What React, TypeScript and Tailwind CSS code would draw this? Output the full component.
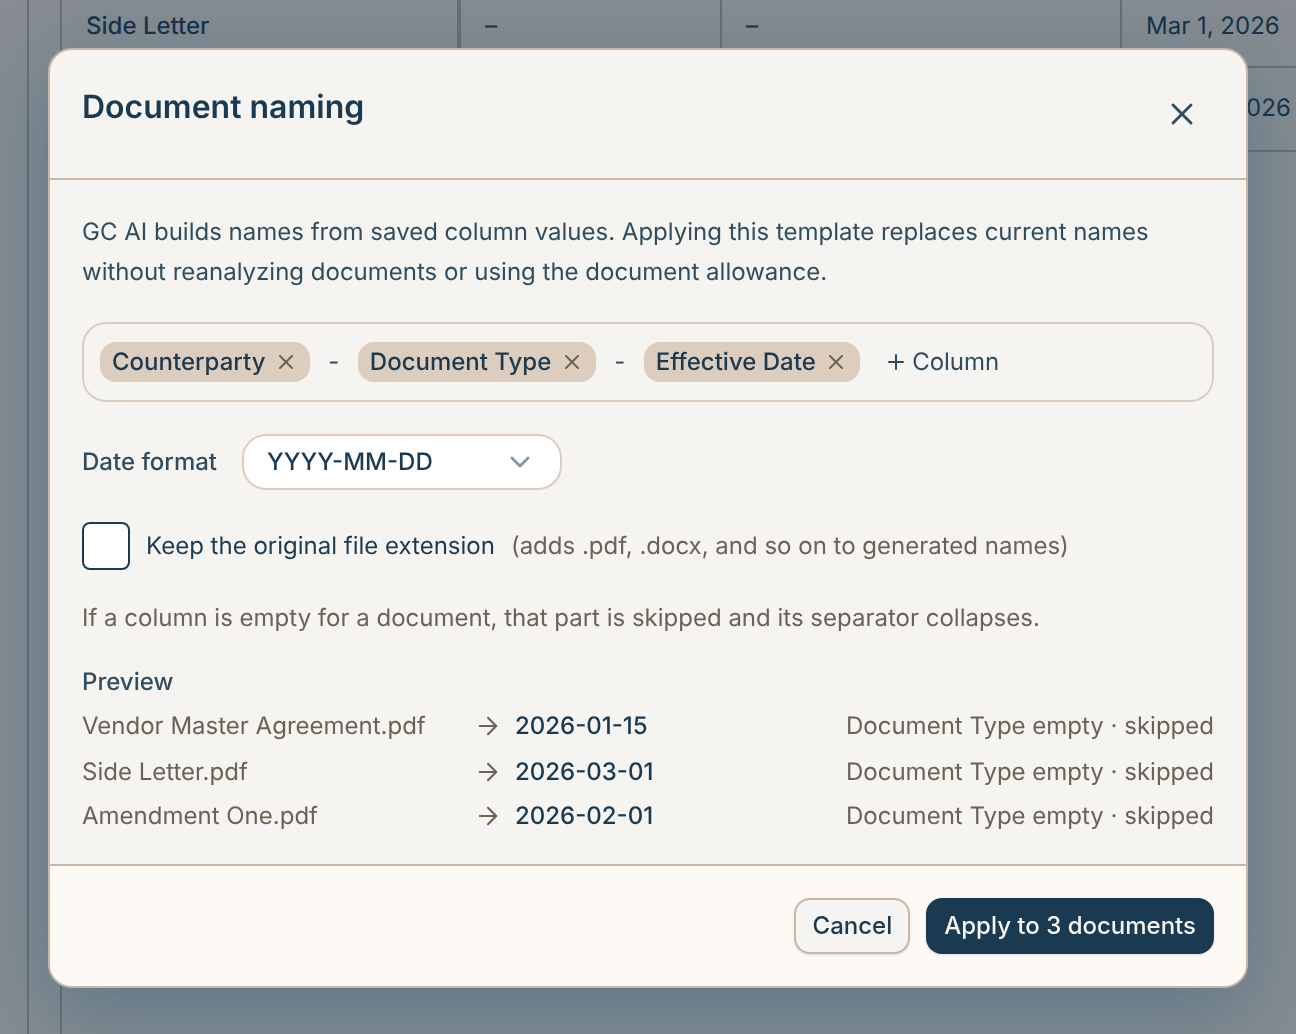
import { ArrowRight, ChevronDown, Plus, X } from 'lucide-react';

const chips = ['Counterparty', 'Document Type', 'Effective Date'];

const previews = [
  { file: 'Vendor Master Agreement.pdf', name: '2026-01-15' },
  { file: 'Side Letter.pdf', name: '2026-03-01' },
  { file: 'Amendment One.pdf', name: '2026-02-01' },
];

function BackgroundTable() {
  return (
    <div className="flex h-full text-[24px] text-[#14324a]">
      <div className="w-[27px] shrink-0" />
      <div className="h-full w-[35px] shrink-0 border-x-2 border-[#666f73]" />
      <div className="min-w-0 flex-1">
        <div className="flex h-[68px] border-b-2 border-[#666f73]">
          <div className="w-[399px] shrink-0 border-r-4 border-[#666f73] pl-[24px] pt-[8px] font-medium leading-[36px]">Side Letter</div>
          <div className="w-[261px] shrink-0 border-r-2 border-[#666f73] pl-[24px] pt-[8px] leading-[36px]">–</div>
          <div className="w-[400px] shrink-0 border-r-2 border-[#666f73] pl-[24px] pt-[8px] leading-[36px]">–</div>
          <div className="flex-1 pl-[24px] pt-[8px] leading-[36px] whitespace-nowrap">Mar 1, 2026</div>
        </div>
        <div className="flex h-[84px] border-b-2 border-[#666f73]">
          <div className="w-[1060px] shrink-0" />
          <div className="flex-1 pl-[24px] pt-[22px] leading-[36px] whitespace-nowrap">Jan 15, 2026</div>
        </div>
      </div>
    </div>
  );
}

export default function App() {
  return (
    <div className="relative h-[1034px] w-[1296px] overflow-hidden bg-[#868c91] font-['Inter',sans-serif] antialiased [text-rendering:geometricPrecision]">
      <BackgroundTable />
      <div className="absolute left-[48px] top-[48px] flex h-[940px] w-[1200px] transform-gpu flex-col overflow-hidden rounded-[24px] border-2 border-[#c8b6a6] bg-[#f5f4f0] shadow-[0_24px_80px_rgba(30,90,120,0.4)]">
        <header className="flex h-[130px] shrink-0 items-start justify-between border-b-2 border-[#c8b6a6] pl-[32px] pr-[46px]">
          <h1 className="pt-[37px] text-[32px] font-semibold leading-[40px] text-[#1a3a52]">Document naming</h1>
          <button className="mt-[46px] text-[#2f4d60]">
            <X size={36} strokeWidth={1.9} />
          </button>
        </header>

        <main className="flex-1 px-[32px] pt-[32px]">
          <p className="text-[24px] leading-[40px] text-[#2f4d60]">
            GC AI builds names from saved column values. Applying this template replaces current names
            without reanalyzing documents or using the document allowance.
          </p>

          <div className="mt-[30px] flex h-[80px] items-center rounded-[24px] border-2 border-[#dccdbe] pl-[16px]">
            {chips.map((chip, i) => (
              <div key={chip} className="flex items-center">
                {i > 0 && <span className="w-[48px] text-center text-[24px] text-[#2f4d60]">-</span>}
                <span className="flex h-[40px] items-center gap-[8.4px] rounded-[16px] bg-[#dccdbe] px-[12px] text-[24px] font-medium text-[#1a3a52]">
                  {chip}
                  <X size={24} strokeWidth={2} className="text-[#6b6155]" />
                </span>
              </div>
            ))}
            <span className="ml-[24px] flex items-center gap-[4px] text-[24px] text-[#2f4d60]">
              <Plus size={24} strokeWidth={2} />
              Column
            </span>
          </div>

          <div className="mt-[32px] flex items-center gap-[25px]">
            <span className="text-[24px] font-medium text-[#2f4d60]">Date format</span>
            <div className="flex h-[56px] w-[320px] items-center justify-between rounded-[24px] border-2 border-[#dccdbe] bg-white pl-[23px] pr-[24px] text-[24px] font-medium text-[#1a3a52]">
              YYYY-MM-DD
              <ChevronDown size={32} strokeWidth={2} className="text-[#8295a3]" />
            </div>
          </div>

          <div className="mt-[32px] flex items-center">
            <span className="h-[48px] w-[48px] rounded-[8px] border-2 border-[#1a3a52] bg-white" />
            <span className="ml-[16px] text-[24px] text-[#1a3a52]">Keep the original file extension</span>
            <span className="ml-[16px] text-[24px] text-[#6b6155]">(adds .pdf, .docx, and so on to generated names)</span>
          </div>

          <p className="mt-[30px] text-[24px] leading-[36px] text-[#6b6155]">
            If a column is empty for a document, that part is skipped and its separator collapses.
          </p>

          <div className="mt-[28px] text-[24px] font-medium leading-[36px] text-[#2f4d60]">Preview</div>
          <div className="mt-[2px] grid grid-cols-[392px_41px_1fr_auto] grid-rows-[47px_45px_43px] items-center text-[24px]">
            {previews.map(row => (
              <div key={row.file} className="contents">
                <span className="text-[#6b6155]">{row.file}</span>
                <ArrowRight size={28} strokeWidth={1.8} className="text-[#6b6155]" />
                <span className="font-medium text-[#1a3a52]">{row.name}</span>
                <span className="text-[#6b6155]">Document Type empty · skipped</span>
              </div>
            ))}
          </div>
        </main>

        <footer className="flex h-[122px] shrink-0 items-center justify-end gap-[16px] border-t-2 border-[#c8b6a6] bg-[#fdf9f5] px-[32px]">
          <button className="h-[56px] rounded-[16px] border-2 border-[#c8b6a6] bg-[#f5f4f0] pl-[17px] pr-[16px] text-[24px] font-medium text-[#1a3a52] shadow-sm">
            Cancel
          </button>
          <button className="h-[56px] rounded-[16px] bg-[#1a3a52] px-[18px] text-[24px] font-medium text-[#f5f4f0] shadow-sm">
            Apply to 3 documents
          </button>
        </footer>
      </div>
    </div>
  );
}
